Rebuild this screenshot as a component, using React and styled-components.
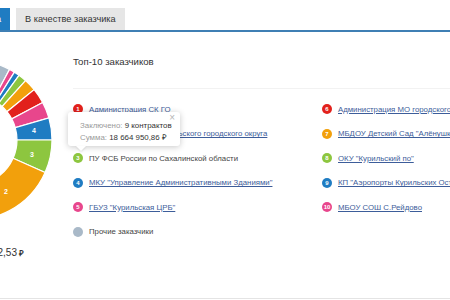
import React from "react";
import styled, { createGlobalStyle } from "styled-components";

const Global = createGlobalStyle`
  html, body { margin: 0; padding: 0; background: #fff; overflow: hidden; }
  body { font-family: "Liberation Sans", Arial, sans-serif; color: #333; }
`;

const Page = styled.div`
  width: 450px;
  height: 298px;
  border-bottom: 1px solid #e4e4e4;
  overflow: hidden;
  display: flex;
  flex-direction: column;
`;

const TabBar = styled.div`
  display: flex;
  align-items: flex-end;
  gap: 6px;
  padding-top: 8px;
  height: 22px;
  border-bottom: 2px solid #3f7fb4;
`;

const Tab = styled.div`
  box-sizing: border-box;
  height: 22px;
  line-height: 22px;
  font-size: 9.2px;
  white-space: nowrap;
  overflow: hidden;
  padding: ${(p) => (p.$active ? "0 9px 0 0" : "0 9px")};
  width: ${(p) => (p.$active ? "10px" : "auto")};
  background: ${(p) => (p.$active ? "#1f7cc2" : "#e6e6e6")};
  color: ${(p) => (p.$active ? "#fff" : "#333")};
  direction: ${(p) => (p.$active ? "rtl" : "ltr")};
`;

const Content = styled.div`
  display: flex;
  flex: 1;
`;

const ChartCol = styled.div`
  width: 73px;
  flex: none;
  display: flex;
  flex-direction: column;
`;

const Donut = styled.svg`
  display: block;
  width: 73px;
  height: 200px;
`;

const Total = styled.div`
  display: flex;
  justify-content: flex-end;
  padding-right: 49px;
  margin-top: 15px;
  font-size: 10px;
  color: #333;
  white-space: nowrap;
`;

const Rub = styled.span`
  font-size: 8px;
  font-weight: bold;
  margin-left: 2px;
`;

const Main = styled.div`
  position: relative;
  flex: 1;
  padding-top: 23px;
  min-width: 0;
`;

const Title = styled.div`
  font-size: 9.6px;
  line-height: 14px;
  color: #333;
  padding-bottom: 19px;
  border-bottom: 1px solid #f2f2f2;
`;

const Legend = styled.div`
  margin-top: 8px;
  display: grid;
  grid-template-columns: 249px 1fr;
  grid-auto-flow: column;
  grid-template-rows: repeat(6, 24.5px);
`;

const Item = styled.div`
  display: flex;
  align-items: center;
  gap: 6px;
  white-space: nowrap;
  overflow: hidden;
  font-size: 7.8px;
`;

const Badge = styled.span`
  flex: none;
  width: 10px;
  height: 10px;
  border-radius: 50%;
  background: ${(p) => p.$color};
  color: #fff;
  font-size: 6px;
  font-weight: bold;
  line-height: 10px;
  text-align: center;
`;

const Name = styled.span`
  color: ${(p) => (p.$link ? "#3d5d9a" : "#444")};
  text-decoration: ${(p) => (p.$link ? "underline" : "none")};
  text-underline-offset: 1px;
`;

const Tooltip = styled.div`
  position: absolute;
  left: -5px;
  top: 80px;
  width: 112px;
  height: 34px;
  box-sizing: border-box;
  padding: 8px 0 0 12px;
  background: #fff;
  border-radius: 3px;
  box-shadow: 0 1px 6px rgba(0, 0, 0, 0.22);
  font-size: 7.9px;
  line-height: 12px;
  white-space: nowrap;
  &::after {
    content: "";
    position: absolute;
    left: 8px;
    bottom: -5px;
    width: 0;
    height: 0;
    border-left: 5px solid transparent;
    border-right: 5px solid transparent;
    border-top: 5px solid #fff;
    filter: drop-shadow(0 1px 1px rgba(0, 0, 0, 0.12));
  }
`;

const Close = styled.span`
  position: absolute;
  right: 5px;
  top: 0px;
  font-size: 10px;
  color: #b5b5b5;
`;

const Label = styled.span`
  color: #9a9a9a;
`;

const Value = styled.span`
  color: #333;
`;

const CX = -28;
const CY = 140;
const R = 80;
const r = 45;

function pt(rad, deg) {
  const a = (deg * Math.PI) / 180;
  return [CX + rad * Math.cos(a), CY - rad * Math.sin(a)];
}

function arc(a0, a1) {
  const [x1, y1] = pt(R, a1);
  const [x2, y2] = pt(R, a0);
  const [x3, y3] = pt(r, a0);
  const [x4, y4] = pt(r, a1);
  const large = Math.abs(a1 - a0) > 180 ? 1 : 0;
  return `M${x1} ${y1} A${R} ${R} 0 ${large} 1 ${x2} ${y2} L${x3} ${y3} A${r} ${r} 0 ${large} 0 ${x4} ${y4} Z`;
}

const segments = [
  { a0: 62, a1: 110, c: "#a9b9c8" },
  { a0: 58, a1: 62, c: "#e8468c" },
  { a0: 54, a1: 58, c: "#1f7cc2" },
  { a0: 48, a1: 54, c: "#8dc63f" },
  { a0: 39, a1: 48, c: "#f2a00c" },
  { a0: 28, a1: 39, c: "#e2211c" },
  { a0: 16, a1: 28, c: "#e8468c" },
  { a0: 0, a1: 16, c: "#1f7cc2" },
  { a0: -24, a1: 0, c: "#8dc63f" },
  { a0: -100, a1: -24, c: "#f2a00c" },
  { a0: 110, a1: 260, c: "#e2211c" },
];

const items = [
  { n: "1", c: "#e2211c", t: "Администрация СК ГО", link: true },
  { n: "2", c: "#f2a00c", t: "Собрание Северо-Курильского городского округа", link: true },
  { n: "3", c: "#8dc63f", t: "ПУ ФСБ России по Сахалинской области", link: false },
  { n: "4", c: "#1f7cc2", t: "МКУ \"Управление Административными Зданиями\"", link: true },
  { n: "5", c: "#e8468c", t: "ГБУЗ \"Курильская ЦРБ\"", link: true },
  { n: "", c: "#a9b9c8", t: "Прочие заказчики", link: false },
  { n: "6", c: "#e2211c", t: "Администрация МО городского округа", link: true },
  { n: "7", c: "#f2a00c", t: "МБДОУ Детский Сад \"Алёнушка\"", link: true },
  { n: "8", c: "#8dc63f", t: "ОКУ \"Курильский по\"", link: true },
  { n: "9", c: "#1f7cc2", t: "КП \"Аэропорты Курильских Островов\"", link: true },
  { n: "10", c: "#e8468c", t: "МБОУ СОШ С.Рейдово", link: true },
];

export default function App() {
  return (
    <>
      <Global />
      <Page>
        <TabBar>
          <Tab $active>Как поставщика</Tab>
          <Tab>В качестве заказчика</Tab>
        </TabBar>
        <Content>
          <ChartCol>
            <Donut viewBox="0 32 73 200">
              {segments.map((s, i) => (
                <path key={i} d={arc(s.a0, s.a1)} fill={s.c} stroke="#fff" strokeWidth="1.2" />
              ))}
              <text x="34" y="133" fill="#fff" fontSize="7" fontWeight="bold" textAnchor="middle" fontFamily="Liberation Sans, sans-serif">4</text>
              <text x="32" y="156.5" fill="#fff" fontSize="7" fontWeight="bold" textAnchor="middle" fontFamily="Liberation Sans, sans-serif">3</text>
              <text x="6" y="193.5" fill="#fff" fontSize="7" fontWeight="bold" textAnchor="middle" fontFamily="Liberation Sans, sans-serif">2</text>
            </Donut>
            <Total>
              <span>
                123 456 782,53<Rub>₽</Rub>
              </span>
            </Total>
          </ChartCol>
          <Main>
            <Title>Топ-10 заказчиков</Title>
            <Legend>
              {items.map((it, i) => (
                <Item key={i}>
                  <Badge $color={it.c}>{it.n}</Badge>
                  <Name $link={it.link}>{it.t}</Name>
                </Item>
              ))}
            </Legend>
            <Tooltip>
              <Close>×</Close>
              <div>
                <Label>Заключено: </Label>
                <Value>9 контрактов</Value>
              </div>
              <div>
                <Label>Сумма: </Label>
                <Value>18 664 950,86 ₽</Value>
              </div>
            </Tooltip>
          </Main>
        </Content>
      </Page>
    </>
  );
}
